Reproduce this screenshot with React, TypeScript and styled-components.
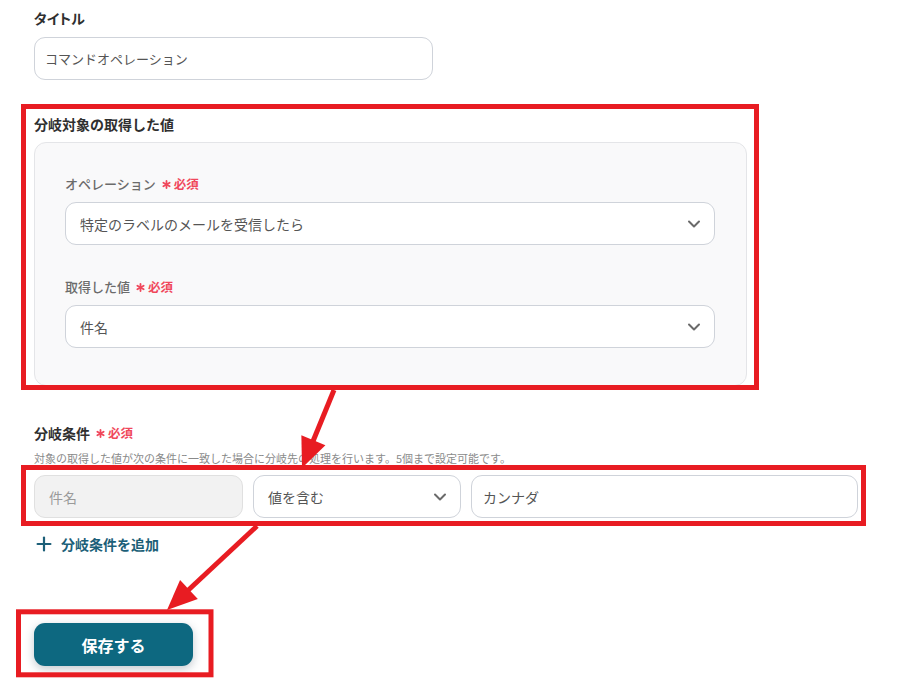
import React from 'react';
import styled, { createGlobalStyle } from 'styled-components';
import { ChevronDown, Plus } from 'lucide-react';

const GlobalStyle = createGlobalStyle`
  html, body {
    margin: 0;
    padding: 0;
    background: #ffffff;
  }
  body {
    font-family: "Noto Sans CJK JP", "Noto Sans", sans-serif;
    color: #333;
  }
`;

const Page = styled.div`
  position: relative;
  width: 906px;
  height: 687px;
  padding-left: 34px;
  box-sizing: border-box;
  overflow: hidden;
`;

const Label = styled.div<{ $top: number; $palt?: boolean }>`
  margin-top: ${(p) => p.$top}px;
  height: 20px;
  line-height: 20px;
  font-size: 14px;
  font-weight: 700;
  color: #2f2f2f;
  display: flex;
  align-items: center;
  font-feature-settings: ${(p) => (p.$palt ? '"palt"' : 'normal')};
`;

const SubLabel = styled.div<{ $top: number }>`
  margin-top: ${(p) => p.$top}px;
  height: 20px;
  line-height: 20px;
  font-size: 13px;
  font-weight: 500;
  color: #6b6b6b;
  display: flex;
  align-items: center;
`;

const Required = styled.span`
  margin-left: 6px;
  font-size: 12.5px;
  font-weight: 700;
  color: #f0475b;
  display: inline-flex;
  align-items: center;
  gap: 3px;
`;

const Field = styled.div<{ $width?: string; $muted?: boolean; $pad?: number; $size?: number }>`
  width: ${(p) => p.$width || '100%'};
  height: 43px;
  box-sizing: border-box;
  border: 1px solid ${(p) => (p.$muted ? '#e0e0e0' : '#cfd3da')};
  border-radius: 11px;
  background: ${(p) => (p.$muted ? '#f2f2f2' : '#ffffff')};
  padding: 0 10px 0 ${(p) => p.$pad ?? 14}px;
  display: flex;
  align-items: center;
  justify-content: space-between;
  font-size: ${(p) => p.$size ?? 14}px;
  color: ${(p) => (p.$muted ? '#9a9a9a' : '#555555')};
  flex-shrink: 0;
`;

const Chevron = styled(ChevronDown)`
  color: #6a6a6a;
  flex-shrink: 0;
`;

const Panel = styled.div`
  margin-top: 8px;
  width: 713px;
  box-sizing: border-box;
  background: #f9f9fa;
  border: 1px solid #e4e5e8;
  border-radius: 12px;
  padding: 31px 31px 37px 30px;
`;

const FieldGap = styled.div`
  height: 8px;
`;

const Hint = styled.div`
  margin-top: 7px;
  height: 16px;
  line-height: 16px;
  font-size: 11px;
  color: #8a8a8a;
`;

const ConditionRow = styled.div`
  margin-top: 9px;
  display: flex;
  gap: 10px;
`;

const AddLink = styled.div`
  margin-top: 16px;
  height: 20px;
  display: flex;
  align-items: center;
  gap: 6px;
  font-size: 14px;
  font-weight: 700;
  color: #1c5f78;
  margin-left: -1px;
`;

const SaveButton = styled.button`
  margin-top: 69px;
  width: 159px;
  height: 43px;
  border: none;
  border-radius: 11px;
  background: #0d6880;
  color: #ffffff;
  font-family: inherit;
  font-size: 16px;
  font-weight: 700;
  box-shadow: 0 3px 10px rgba(40, 60, 80, 0.28);
  display: block;
`;

const Annotations = styled.svg`
  position: absolute;
  left: 0;
  top: 0;
  pointer-events: none;
`;

const RED = '#e81c22';

const Asterisk: React.FC = () => (
  <svg width={9} height={9} viewBox="0 0 10 10">
    <g stroke="#f0475b" strokeWidth={2} strokeLinecap="round">
      <line x1={5} y1={1} x2={5} y2={9} />
      <line x1={1.5} y1={3} x2={8.5} y2={7} />
      <line x1={1.5} y1={7} x2={8.5} y2={3} />
    </g>
  </svg>
);

const RequiredMark: React.FC = () => (
  <Required>
    <Asterisk />
    必須
  </Required>
);

const Arrow: React.FC<{ x1: number; y1: number; x2: number; y2: number }> = ({ x1, y1, x2, y2 }) => {
  const dx = x2 - x1;
  const dy = y2 - y1;
  const len = Math.hypot(dx, dy);
  const ux = dx / len;
  const uy = dy / len;
  const headLen = 30;
  const headW = 13;
  const bx = x2 - ux * headLen;
  const by = y2 - uy * headLen;
  const px = -uy;
  const py = ux;
  const pts = `${x2},${y2} ${bx + px * headW},${by + py * headW} ${bx - px * headW},${by - py * headW}`;
  return (
    <g>
      <line x1={x1} y1={y1} x2={bx + ux * 4} y2={by + uy * 4} stroke={RED} strokeWidth={5} />
      <polygon points={pts} fill={RED} />
    </g>
  );
};

const App: React.FC = () => {
  return (
    <Page>
      <GlobalStyle />
      <Label $top={8} $palt>タイトル</Label>
      <Field $width="399px" $pad={10} $size={13} style={{ marginTop: 9 }}>
        コマンドオペレーション
      </Field>

      <Label $top={34}>分岐対象の取得した値</Label>
      <Panel>
        <SubLabel $top={0}>
          オペレーション
          <RequiredMark />
        </SubLabel>
        <FieldGap />
        <Field>
          特定のラベルのメールを受信したら
          <Chevron size={20} strokeWidth={2.4} />
        </Field>
        <SubLabel $top={32}>
          取得した値
          <RequiredMark />
        </SubLabel>
        <FieldGap />
        <Field>
          件名
          <Chevron size={20} strokeWidth={2.4} />
        </Field>
      </Panel>

      <Label $top={37}>
        分岐条件
        <RequiredMark />
      </Label>
      <Hint>対象の取得した値が次の条件に一致した場合に分岐先の処理を行います。5個まで設定可能です。</Hint>
      <ConditionRow>
        <Field $width="209px" $muted>
          件名
        </Field>
        <Field $width="208px">
          値を含む
          <Chevron size={20} strokeWidth={2.4} />
        </Field>
        <Field $width="387px" $pad={11}>
          カンナダ
        </Field>
      </ConditionRow>

      <AddLink>
        <Plus size={22} strokeWidth={2.4} />
        分岐条件を追加
      </AddLink>

      <SaveButton>保存する</SaveButton>

      <Annotations width={906} height={687} viewBox="0 0 906 687">
        <rect x={23.5} y={106.5} width={733} height={281} fill="none" stroke={RED} strokeWidth={5} />
        <rect x={23.5} y={467.5} width={840} height={56} fill="none" stroke={RED} strokeWidth={5} />
        <rect x={18.5} y={611.8} width={192.5} height={63} fill="none" stroke={RED} strokeWidth={5} />
        <Arrow x1={334} y1={390} x2={302} y2={468} />
        <Arrow x1={257} y1={526} x2={167} y2={610} />
      </Annotations>
    </Page>
  );
};

export default App;
